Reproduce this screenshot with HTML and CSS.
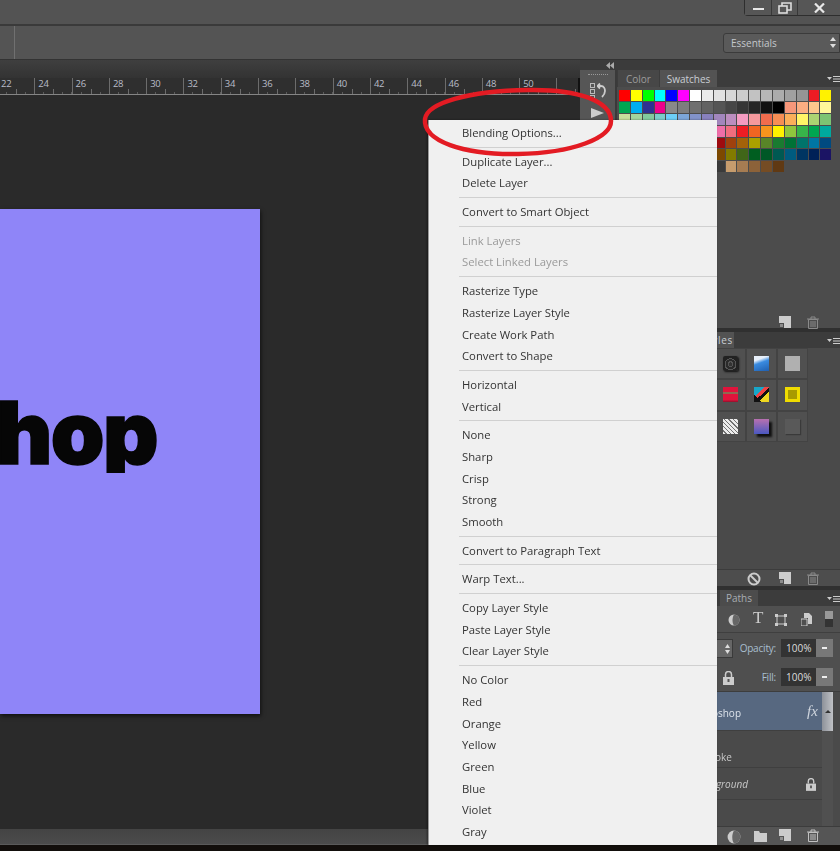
FILE: index.html
```html
<!DOCTYPE html>
<html lang="en">
<head>
  <meta charset="UTF-8">
  <title>Photoshop - Layer context menu</title>
  <link rel="stylesheet" href="styles.css">
</head>
<body>
<div class="app">

  <!-- Title bar -->
  <header class="titlebar">
    <div class="win-buttons">
      <button class="win-btn win-min"><span class="min-bar"></span></button>
      <button class="win-btn win-restore">
        <svg width="14" height="12" viewBox="0 0 14 12" fill="none" stroke="#ddd" stroke-width="1.6"><rect x="1" y="4" width="8" height="7"/><path d="M4 4V1h9v7H9"/></svg>
      </button>
      <button class="win-btn win-close">
        <svg width="11" height="10" viewBox="0 0 11 10" stroke="#e8e8e8" stroke-width="2.2"><path d="M1 0.5l9 9M10 0.5l-9 9"/></svg>
      </button>
    </div>
  </header>

  <!-- Options bar -->
  <div class="optionsbar">
    <span class="opt-sep"></span>
    <div class="workspace-select">
      <span>Essentials</span>
      <svg class="updown" width="6" height="11" viewBox="0 0 6 11" fill="#ddd"><path d="M3 0l3 4H0zM3 11L0 7h6z"/></svg>
    </div>
  </div>

  <div class="workspace">

    <!-- Document area -->
    <section class="docarea">
      <div class="doc-tabs"></div>
      <div class="ruler" id="ruler"></div>
      <div class="canvas">
        <div class="document">
          <span class="doc-text">Photoshop</span>
        </div>
      </div>
      <div class="statusbar"></div>
    </section>

    <!-- Right panels -->
    <aside class="panels">
      <div class="panel-strip">
        <svg width="8" height="7" viewBox="0 0 8 7" fill="#aaa"><path d="M4 0v7L0 3.500zM8 0v7L4 3.500z"/></svg>
      </div>
      <div class="panel-row">
        <div class="dock">
          <div class="dock-grip"></div>
          <div class="dock-history">
            <div class="dock-squares"><i></i><i></i><i></i></div>
            <svg width="9" height="15" viewBox="0 0 9 15" fill="none" stroke="#ccc" stroke-width="1.800"><path d="M1 3h3c3 0 4 3 4 5s-1 4-3 6"/><path d="M3 0.500L0.500 3 3 5.500"/></svg>
          </div>
          <svg class="dock-play" width="13" height="10" viewBox="0 0 13 10" fill="#ccc"><path d="M0 0l13 5-13 5z"/></svg>
        </div>

        <div class="stack">
          <!-- Color / Swatches -->
          <section class="panel swatches-panel">
            <div class="tabs">
              <span class="tab tab-off">Color</span>
              <span class="tab tab-on">Swatches</span>
              <svg class="panel-menu" width="13" height="8" viewBox="0 0 13 8"><use href="#menu-icon"/></svg>
            </div>
            <div class="swatches" id="swatches"></div>
            <div class="panel-foot swatch-foot">
              <svg class="ic-new" width="12" height="12" viewBox="0 0 12 12"><use href="#new-icon"/></svg>
              <svg class="ic-trash" width="12" height="13" viewBox="0 0 12 13"><use href="#trash-icon"/></svg>
            </div>
          </section>

          <!-- Styles -->
          <section class="panel styles-panel">
            <div class="tabs tabs-small">
              <span class="tab tab-on styles-tab">Styles</span>
              <svg class="panel-menu" width="13" height="8" viewBox="0 0 13 8"><use href="#menu-icon"/></svg>
            </div>
            <div class="styles-grid">
              <div class="style-cell"></div><div class="style-cell"></div><div class="style-cell"></div>
              <div class="style-cell"><i class="st st-camera"></i></div>
              <div class="style-cell"><i class="st st-blue"></i></div>
              <div class="style-cell"><i class="st st-gray"></i></div>
              <div class="style-cell"></div><div class="style-cell"></div><div class="style-cell"></div>
              <div class="style-cell"><i class="st st-red"></i></div>
              <div class="style-cell"><i class="st st-multi"></i></div>
              <div class="style-cell"><i class="st st-gold"></i></div>
              <div class="style-cell"></div><div class="style-cell"></div><div class="style-cell"></div>
              <div class="style-cell"><i class="st st-noise"></i></div>
              <div class="style-cell"><i class="st st-purple"></i></div>
              <div class="style-cell"><i class="st st-dark"></i></div>
            </div>
            <div class="panel-foot styles-foot">
              <svg class="ic-no" width="14" height="14" viewBox="0 0 14 14" fill="none" stroke="#ccc" stroke-width="2"><circle cx="7" cy="7" r="5.500"/><path d="M3 3l8 8"/></svg>
              <svg class="ic-new" width="12" height="12" viewBox="0 0 12 12"><use href="#new-icon"/></svg>
              <svg class="ic-trash" width="12" height="13" viewBox="0 0 12 13"><use href="#trash-icon"/></svg>
            </div>
          </section>

          <!-- Layers -->
          <section class="panel layers-panel">
            <div class="tabs tabs-small">
              <span class="tab tab-off paths-tab">Paths</span>
              <svg class="panel-menu" width="13" height="8" viewBox="0 0 13 8"><use href="#menu-icon"/></svg>
            </div>
            <div class="layer-filter">
              <svg class="f-circle" width="12" height="12" viewBox="0 0 12 12"><circle cx="6" cy="6" r="5.500" fill="#ccc"/><path d="M6 0.500a5.500 5.500 0 0 1 0 11c-2-2-2-8 0-11z" fill="#666"/></svg>
              <span class="f-type">T</span>
              <svg class="f-crop" width="12" height="12" viewBox="0 0 12 12" fill="#ccc"><path d="M2 2h8v8H2z" fill="none" stroke="#ccc"/><path d="M0 0h3v3H0zM9 0h3v3H9zM0 9h3v3H0zM9 9h3v3H9z"/></svg>
              <svg class="f-doc" width="11" height="13" viewBox="0 0 11 13" fill="#ccc"><path d="M3 0h5l3 3v8H7V5H3z"/><path d="M0 6h6v7H0z" fill="none" stroke="#ccc"/></svg>
              <span class="f-toggle"></span>
            </div>
            <div class="layer-opt opacity-row">
              <span class="mode-arrows"><svg width="5" height="10" viewBox="0 0 5 10" fill="#ddd"><path d="M2.500 0L5 4H0zM2.500 10L0 6h5z"/></svg></span>
              <label class="opt-label">Opacity:</label>
              <div class="num-field"><span>100%</span><b><i></i></b></div>
            </div>
            <div class="layer-opt fill-row">
              <svg class="lock-ic" width="11" height="14" viewBox="0 0 11 14"><use href="#lock-icon"/></svg>
              <label class="opt-label">Fill:</label>
              <div class="num-field"><span>100%</span><b><i></i></b></div>
            </div>
            <div class="layer-list">
              <div class="layer-rows">
                <div class="layer layer-selected"><span class="layer-name name-type">Photoshop</span><em class="fx">fx</em></div>
                <div class="layer layer-effect"><span class="layer-name name-stroke">Stroke</span></div>
                <div class="layer layer-bg"><span class="layer-name name-bg">Background</span>
                  <svg class="lock-small" width="10" height="13" viewBox="0 0 11 14"><use href="#lock-icon"/></svg>
                </div>
              </div>
              <div class="layer-scroll"><span class="thumb"></span></div>
            </div>
            <div class="panel-foot layers-foot">
              <svg class="ic-half" width="14" height="14" viewBox="0 0 12 12"><circle cx="6" cy="6" r="5.500" fill="#ccc"/><path d="M6 0.500a5.500 5.500 0 0 1 0 11c-2-2-2-8 0-11z" fill="#666"/></svg>
              <svg class="ic-folder" width="13" height="11" viewBox="0 0 13 11" fill="#ccc"><path d="M0 0h5l1 2h7v9H0z"/></svg>
              <svg class="ic-new" width="12" height="12" viewBox="0 0 12 12"><use href="#new-icon"/></svg>
              <svg class="ic-trash bright" width="12" height="13" viewBox="0 0 12 13"><use href="#trash-icon"/></svg>
            </div>
          </section>
        </div>
      </div>
    </aside>
  </div>

  <div class="taskbar"></div>

  <!-- Context menu -->
  <ul class="context-menu">
    <li>Blending Options...</li>
    <li class="sep"></li>
    <li>Duplicate Layer...</li>
    <li>Delete Layer</li>
    <li class="sep"></li>
    <li>Convert to Smart Object</li>
    <li class="sep"></li>
    <li class="disabled">Link Layers</li>
    <li class="disabled">Select Linked Layers</li>
    <li class="sep"></li>
    <li>Rasterize Type</li>
    <li>Rasterize Layer Style</li>
    <li>Create Work Path</li>
    <li>Convert to Shape</li>
    <li class="sep"></li>
    <li>Horizontal</li>
    <li>Vertical</li>
    <li class="sep"></li>
    <li>None</li>
    <li>Sharp</li>
    <li>Crisp</li>
    <li>Strong</li>
    <li>Smooth</li>
    <li class="sep"></li>
    <li>Convert to Paragraph Text</li>
    <li class="sep"></li>
    <li>Warp Text...</li>
    <li class="sep"></li>
    <li>Copy Layer Style</li>
    <li>Paste Layer Style</li>
    <li>Clear Layer Style</li>
    <li class="sep"></li>
    <li>No Color</li>
    <li>Red</li>
    <li>Orange</li>
    <li>Yellow</li>
    <li>Green</li>
    <li>Blue</li>
    <li>Violet</li>
    <li>Gray</li>
  </ul>

  <!-- Red marker circle drawn over the screenshot -->
  <svg class="marker" width="200" height="74" viewBox="0 0 200 74" fill="none" stroke="#e31b23">
    <path stroke-width="4.500" d="M7 33C9 17 50 5 110 4c50-1 83 11 83 31 0 17-38 32-93 33C45 69 5 55 7 33z"/>
  </svg>

  <!-- Shared icons -->
  <svg class="icon-defs" width="0" height="0">
    <defs>
      <g id="menu-icon" fill="#ccc"><path d="M0 2h5L2.500 5zM6 1h7v1H6zM6 3.500h7v1H6zM6 6h7v1H6z"/></g>
      <g id="new-icon" fill="#ccc"><path d="M0 0h12v12H5V7H0z"/><path d="M1 8h3v3H1z" opacity=".5"/></g>
      <g id="trash-icon" fill="none" stroke="#8a8a8a" stroke-width="1"><path d="M0 3h12M4 3V1h4v2M1.500 3.500h9V12.500h-9zM4 5v6M6 5v6M8 5v6"/></g>
      <g id="lock-icon"><path d="M2.500 6V3.500a3 3 0 0 1 6 0V6" fill="none" stroke="#ccc" stroke-width="1.500"/><path d="M0 6h11v8H0z" fill="#ccc"/><path d="M4.500 8h2v3h-2z" fill="#555"/></g>
    </defs>
  </svg>
</div>

<script src="script.js"></script>
</body>
</html>
```

FILE: styles.css
```css
/* Global */
* {
  margin: 0;
  padding: 0;
  box-sizing: border-box;
}

html, body {
  width: 840px;
  height: 851px;
  overflow: hidden;
  background: #111;
}

body {
  font-family: "Open Sans", "Liberation Sans", sans-serif;
}

.app {
  position: relative;
  display: flex;
  flex-direction: column;
  width: 840px;
  height: 851px;
  overflow: hidden;
  filter: blur(0.4px);
}

.icon-defs {
  position: absolute;
}

/* Title bar */
.titlebar {
  display: flex;
  justify-content: flex-end;
  align-items: flex-start;
  height: 26px;
  background: #535353;
  border-bottom: 2px solid #3a3a3a;
}

.win-buttons {
  display: flex;
  width: 96px;
  height: 16px;
  background: #4d4d4d;
  border: 1px solid #2e2e2e;
  border-top: none;
  border-right: none;
  border-bottom-left-radius: 4px;
}

.win-btn {
  display: flex;
  align-items: center;
  justify-content: center;
  border: none;
  border-right: 1px solid #383838;
  background: #565656;
}

.win-min { width: 27px; }
.win-restore { width: 26px; }
.win-close { flex: 1; border-right: none; }

.min-bar {
  display: block;
  width: 11px;
  height: 2px;
  margin-top: 3px;
  background: #e6e6e6;
}

/* Options bar */
.optionsbar {
  display: flex;
  align-items: center;
  justify-content: space-between;
  height: 34px;
  padding-left: 14px;
  background: #545454;
  border-bottom: 1px solid #333;
}

.opt-sep {
  width: 1px;
  height: 100%;
  background: #707070;
}

.workspace-select {
  display: flex;
  align-items: center;
  justify-content: space-between;
  width: 117px;
  height: 20px;
  padding: 0 3px 0 7px;
  color: #c4c8cc;
  font-size: 10px;
  background: #5a5a5a;
  border: 1px solid #3b3b3b;
  border-radius: 3px 0 0 3px;
}

/* Main row */
.workspace {
  display: flex;
  flex: 1;
  min-height: 0;
}

.docarea {
  display: flex;
  flex-direction: column;
  width: 580px;
}

.doc-tabs {
  height: 18px;
  background: linear-gradient(#3f3f3f, #333);
}

.ruler {
  display: flex;
  height: 17px;
  margin-left: -3px;
  margin-right: 2px;
  overflow: hidden;
  background: #2f2f2f;
  border-bottom: 1px solid #858585;
}

.ruler-cell {
  position: relative;
  flex: 0 0 37.3px;
  padding: 0 0 0 3px;
  color: #b9bdc8;
  font-size: 9.5px;
  line-height: 12px;
  letter-spacing: -0.3px;
  border-left: 1px solid #6c6c6c;
  background: repeating-linear-gradient(90deg, transparent 0 8.3px, #5c5c5c 8.3px 9.3px) left bottom / 100% 2px no-repeat;
}

.ruler-cell::after {
  content: "";
  position: absolute;
  left: 18px;
  bottom: 0;
  width: 1px;
  height: 5px;
  background: #6c6c6c;
}

.canvas {
  flex: 1;
  padding-top: 114px;
  background: #2a2a2a;
}

.document {
  display: flex;
  justify-content: flex-end;
  align-items: flex-start;
  width: 260px;
  height: 505px;
  padding: 174px 103px 0 0;
  overflow: hidden;
  background: #8f85f8;
  box-shadow: 1px 2px 4px rgba(0, 0, 0, 0.6);
}

/* clipped so the p's tail stops where the logo type does */
.doc-text {
  display: block;
  flex: none;
  height: 90px;
  overflow: hidden;
  color: #060606;
  font-family: "Inter", "Liberation Sans", sans-serif;
  font-size: 86px;
  font-weight: 900;
  line-height: 100px;
  letter-spacing: -1.5px;
  white-space: nowrap;
  -webkit-text-stroke: 1.6px #060606;
}

.statusbar {
  height: 16px;
  background: linear-gradient(#444, #4b4b4b);
  border-bottom: 1px solid #5a5a5a;
}

/* Panels */
.panels {
  display: flex;
  flex-direction: column;
  width: 260px;
  background: #3a3a3a;
}

.panel-strip {
  display: flex;
  align-items: center;
  justify-content: center;
  height: 11px;
  background: #3b3b3b;
}

.panel-strip svg {
  margin-right: 1px;
  transform: translateX(-100px);
}

.panel-row {
  display: flex;
  flex: 1;
}

.dock {
  width: 37px;
  padding-top: 4px;
  background: #565656;
  border-right: 2px solid #3a3a3a;
}

.dock-grip {
  width: 20px;
  height: 1px;
  margin: 0 auto 8px;
  border-top: 1px dotted #999;
}

.dock-history {
  display: flex;
  gap: 2px;
  justify-content: center;
}

.dock-squares {
  display: flex;
  flex-direction: column;
  gap: 1px;
}

.dock-squares i {
  width: 5px;
  height: 5px;
  border: 1px solid #bbb;
}

.dock-play {
  display: block;
  margin: 8px 0 0 11px;
}

.stack {
  display: flex;
  flex: 1;
  flex-direction: column;
  gap: 4px;
  background: #303030;
}

.panel {
  display: flex;
  flex-direction: column;
  background: #4c4c4c;
}

.swatches-panel { height: 258px; }
.styles-panel { height: 254px; }
.layers-panel { height: 255px; }

.tabs {
  position: relative;
  display: flex;
  flex-shrink: 0;
  height: 17px;
  padding-left: 1px;
  gap: 1px;
  background: #3c3c3c;
}

.tabs-small {
  height: 16px;
}

.tab {
  display: flex;
  align-items: center;
  justify-content: center;
  font-size: 10px;
}

.tab-off {
  width: 41px;
  color: #9c9c9c;
  background: #474747;
}

.tab-on {
  width: 57px;
  color: #c9ced4;
  background: #535353;
}

.panel-menu {
  position: absolute;
  top: 5px;
  right: 0;
}

.styles-tab {
  justify-content: flex-end;
  width: 116px;
  padding-right: 1px;
  letter-spacing: 0.7px;
}

.paths-tab {
  width: 38px;
  margin-left: 102px;
  color: #a8adb3;
  background: #4c4c4c;
}

/* Swatches */
.swatches {
  display: grid;
  grid-template-columns: repeat(18, 11.85px);
  grid-auto-rows: 11.9px;
  flex: 1;
  padding: 3px 0 0 2px;
}

.swatch {
  margin: 0 1px 1px 0;
}

.panel-foot {
  position: relative;
  flex-shrink: 0;
  background: #555;
}

.panel-foot svg {
  position: absolute;
}

.ic-new { left: 162px; top: 2px; }
.ic-trash { left: 190px; top: 2px; }
.ic-no { left: 130px; top: 2px; }
.ic-half { left: 110px; top: 3px; }
.ic-folder { left: 137px; top: 4px; }

.swatch-foot {
  height: 13px;
  margin-bottom: 1px;
  background: #4c4c4c;
}

/* Styles */
.styles-grid {
  display: grid;
  grid-template-columns: repeat(6, 31px);
  grid-auto-rows: 31.3px;
  flex: 1;
  align-content: start;
  padding: 0 0 0 5px;
  background: #4a4a4a;
}

.style-cell {
  display: flex;
  align-items: center;
  justify-content: center;
  background: #505050;
  border: 1px solid #434343;
}

.st {
  display: block;
  width: 15px;
  height: 15px;
}

.st-camera {
  border-radius: 2px;
  background: radial-gradient(circle at 50% 55%, #333 0 2px, #555 2px 3px, #2a2a2a 3px 5px, #555 5px 6px, #222 6px);
  box-shadow: 1px 1px 2px #111;
}

.st-blue {
  background: linear-gradient(160deg, #e8f0fa 0 25%, #3a8be0 45%, #1f5fb0);
}

.st-gray {
  background: #b0b0b0;
}

.st-red {
  background: linear-gradient(#e0143c 0 35%, #8e6a50 35% 50%, #e0143c 50% 85%, #90102c);
}

.st-multi {
  background:
    linear-gradient(45deg, #111 0 25%, transparent 25%),
    linear-gradient(135deg, #18a6c8 0 35%, #e44 35% 50%, #111 50% 65%, #f0d820 65%);
}

.st-gold {
  background: #a89a00;
  border: 3px solid #f0dc00;
}

.st-noise {
  background:
    repeating-linear-gradient(45deg, #fff 0 2px, #777 2px 3px),
    #ccc;
  opacity: 0.9;
}

.st-purple {
  background: linear-gradient(#b870b0, #4a58c0);
  box-shadow: 3px 3px 2px #111;
}

.st-dark {
  background: #595959;
  box-shadow: 1px 1px 1px #3a3a3a;
}

.styles-foot {
  height: 17px;
  background: #4d4d4d;
  border-top: 1px solid #3c3c3c;
}

/* Layers */
.layer-filter {
  position: relative;
  flex-shrink: 0;
  height: 27px;
  background: #505050;
  border-bottom: 1px solid #3f3f3f;
}

.layer-filter > * {
  position: absolute;
}

.f-circle { left: 111px; top: 8px; }
.f-crop { left: 158px; top: 8px; }
.f-doc { left: 184px; top: 7px; }

.f-type {
  left: 136px;
  top: 2px;
  color: #ccc;
  font-family: "Liberation Serif", serif;
  font-size: 17px;
  line-height: 20px;
}

.f-toggle {
  left: 208px;
  top: 5px;
  width: 8px;
  height: 16px;
  background: linear-gradient(#999 0 50%, #333 50%);
}

.layer-opt {
  position: relative;
  display: flex;
  flex-shrink: 0;
  align-items: center;
  justify-content: flex-end;
  height: 30px;
  padding-right: 7px;
  background: #4f4f4f;
}

.fill-row {
  height: 29px;
  border-bottom: 1px solid #3d3d3d;
}

.mode-arrows {
  position: absolute;
  left: 90px;
  top: 6px;
  display: flex;
  align-items: center;
  justify-content: center;
  width: 26px;
  height: 19px;
  padding-left: 15px;
  background: #666;
  border: 1px solid #3a3a3a;
}

.lock-ic {
  position: absolute;
  left: 106px;
  top: 8px;
}

.opt-label {
  margin-right: 5px;
  color: #a9bfd0;
  font-size: 10px;
  letter-spacing: -0.2px;
}

.num-field {
  display: flex;
  width: 52px;
  height: 18px;
  background: #333;
}

.num-field span {
  flex: 1;
  padding-left: 5px;
  color: #ddd;
  font-size: 10px;
  line-height: 18px;
}

.num-field b {
  display: flex;
  align-items: center;
  justify-content: center;
  width: 17px;
  background: #787878;
}

.num-field i {
  width: 5px;
  height: 2px;
  background: #eee;
}

.layer-list {
  display: flex;
  flex: 1;
  padding-right: 7px;
  background: #4a4a4a;
}

.layer-rows {
  flex: 1;
}

.layer {
  position: relative;
  color: #c8c8c8;
  font-size: 10px;
  border-bottom: 1px solid #3f3f3f;
}

.layer-name {
  position: absolute;
  white-space: nowrap;
}

.layer-selected {
  height: 39px;
  background: #576880;
  color: #dde3ea;
}

.name-type { right: 81px; top: 14px; }

.fx {
  position: absolute;
  left: 190px;
  top: 11px;
  color: #d0d6de;
  font-family: "Liberation Serif", serif;
  font-size: 15px;
}

.layer-effect {
  height: 37px;
}

.name-stroke { right: 90px; top: 19px; }

.layer-bg {
  height: 32px;
}

.name-bg {
  right: 74px;
  top: 9px;
  font-style: italic;
}

.lock-small {
  position: absolute;
  left: 189px;
  top: 10px;
}

.layer-scroll {
  width: 11px;
  background: #505050;
}

.thumb {
  display: block;
  position: relative;
  height: 39px;
  background: linear-gradient(90deg, #8d9199, #c0c2c6);
}

/* little arrow in the layer scrollbar */
.thumb::after {
  content: "";
  position: absolute;
  left: 3px;
  top: 18px;
  border: 3px solid transparent;
  border-top: none;
  border-bottom: 3px solid #333;
}

.layers-foot {
  height: 19px;
  background: #555;
  border-top: 1px solid #3c3c3c;
}

.bright use {
  filter: brightness(1.4);
}

.taskbar {
  height: 6px;
  background: #120e0b;
}

/* Context menu */
.context-menu {
  position: absolute;
  left: 428px;
  top: 120px;
  width: 289px;
  height: 725px;
  padding-top: 2px;
  list-style: none;
  color: #333;
  font-size: 11.3px;
  background: #f0f0f0;
  border-left: 1px solid #999;
  box-shadow: -1px 0 2px rgba(0, 0, 0, 0.4);
}

.context-menu li {
  height: 21.7px;
  padding-left: 33px;
  line-height: 21px;
  white-space: nowrap;
}

.context-menu li.sep {
  height: 1px;
  margin: 3px 0 3px 30px;
  padding: 0;
  background: #d0d0d0;
}

.context-menu li.disabled {
  color: #9a9a9a;
}

/* Red marker */
.marker {
  position: absolute;
  left: 418px;
  top: 86px;
}
```

FILE: script.js
```js
// default photoshop swatch rows
var swatchRows = [
  ['#ff0000','#ffff00','#00ff00','#00ffff','#0000ff','#ff00ff','#ffffff','#ebebeb','#e1e1e1','#d7d7d7','#cccccc','#c2c2c2','#b7b7b7','#acacac','#a0a0a0','#959595','#ed1c24','#fff200'],
  ['#00a651','#00aeef','#2e3192','#ec008c','#898989','#7d7d7d','#707070','#626262','#555555','#464646','#363636','#262626','#111111','#000000','#f7977a','#fbad82','#fdc68c','#fff799'],
  ['#c6df9c','#a4d49d','#81ca9d','#7bcdc9','#6ccff7','#7ca6d8','#8293ca','#8881be','#a286bd','#bc8dbf','#f49bc1','#f5999d','#f16c4d','#f68e54','#fbaf5a','#fff467','#acd372','#7dc473'],
  ['#39b778','#16bcb4','#00bff3','#438ccb','#5574b9','#5c5aa7','#855fa8','#a763a9','#ef6ea8','#f16d7e','#ee1d24','#f16522','#f7941d','#fff100','#8fc63d','#37b44a','#00a650','#00a99e'],
  ['#006d3e','#007e7a','#0072bc','#00519e','#313f91','#2f2d7c','#662c90','#91278e','#9e0b0f','#a0410d','#a36209','#aba000','#588528','#197b30','#007236','#00746b','#0076a4','#004a80'],
  ['#005826','#005952','#005b7f','#003562','#002157','#1b1464','#790000','#7b2e00','#7d4900','#827b00','#406618','#005e20','#005826','#005952','#005b7f','#003562','#002157','#1b1464'],
  ['#363636','#464646','#555555','#626262','#707070','#7d7d7d','#898989','#434343','#3a3a3a','#c69c6d','#a67c52','#8c6239','#754c24','#603913']
];

var grid = document.getElementById('swatches');
swatchRows.forEach(function (row) {
  row.forEach(function (color) {
    var cell = document.createElement('div');
    cell.className = 'swatch';
    cell.style.background = color;
    grid.appendChild(cell);
  });
  // short rows must not pull the next one up
  for (var i = row.length; i < 18; i++) grid.appendChild(document.createElement('div'));
});

var ruler = document.getElementById('ruler');
for (var n = 22; n <= 52; n += 2) {
  var cell = document.createElement('div');
  cell.className = 'ruler-cell';
  cell.textContent = n <= 50 ? n : '';
  ruler.appendChild(cell);
}
```
